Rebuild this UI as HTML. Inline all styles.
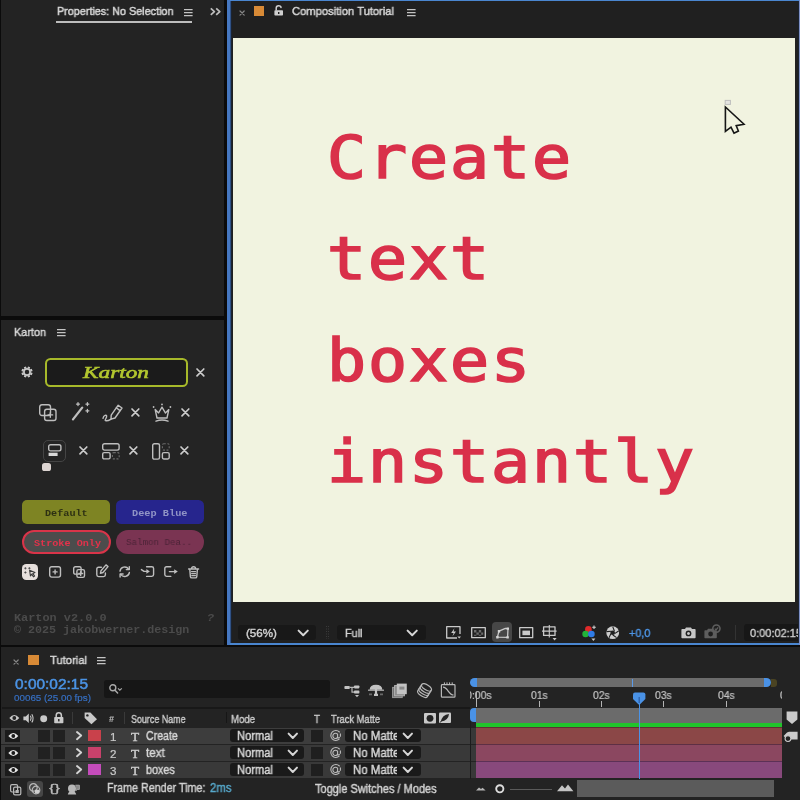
<!DOCTYPE html>
<html lang="en">
<head>
<meta charset="utf-8">
<title>Karton Tutorial</title>
<style>
*{box-sizing:border-box;margin:0;padding:0}
html,body{width:800px;height:800px;overflow:hidden;background:#0b0b0b}
body{position:relative;font-family:"Liberation Sans",sans-serif;color:#cfcfcf;font-size:12px}
.a{position:absolute}
.t{position:absolute;white-space:pre;line-height:1;transform-origin:0 0;will-change:transform}
svg{position:absolute;overflow:visible}
.big{position:absolute;left:327px;font-family:"DejaVu Sans Mono","Liberation Mono",monospace;font-size:59px;letter-spacing:1.75px;line-height:1;color:#d9304a;-webkit-text-stroke:1.7px #d9304a;white-space:nowrap;transform:scaleX(1.1);transform-origin:0 0;will-change:transform}
</style>
</head>
<body>
<div class="a" style="left:1.4px;top:0px;width:222.9px;height:316.2px;background:#232323;"></div>
<div class="t" style="left:57px;top:6.41px;font-family:'Liberation Sans',sans-serif;font-size:11.8px;color:#d8d8d8;-webkit-text-stroke:0.5px #d8d8d8;transform:scaleX(0.9157);">Properties: No Selection</div>
<div class="a" style="left:56px;top:20.6px;width:136px;height:2px;background:#bdbdbd;"></div>
<svg style="left:183.6px;top:9px;" width="9" height="8" viewBox="0 0 9 8"><path d="M0 0.7h8.6M0 3.7h8.6M0 6.7h8.6" stroke="#c4c4c4" stroke-width="1.3" fill="none"/></svg>
<svg style="left:209.6px;top:8.4px;" width="11.2" height="7.4" viewBox="0 0 11.2 7.4"><path d="M0.8 0.4L4.4 3.7L0.8 7M6.2 0.4L9.8 3.7L6.2 7" stroke="#bebebe" stroke-width="1.7" fill="none" stroke-linejoin="round"/></svg>
<div class="a" style="left:1.4px;top:319.8px;width:222.9px;height:324.8px;background:#242424;"></div>
<div class="t" style="left:14px;top:326.51px;font-family:'Liberation Sans',sans-serif;font-size:11.8px;color:#d8d8d8;-webkit-text-stroke:0.45px #d8d8d8;transform:scaleX(0.9204);">Karton</div>
<svg style="left:57px;top:329.4px;" width="9" height="8" viewBox="0 0 9 8"><path d="M0 0.7h8.6M0 3.7h8.6M0 6.7h8.6" stroke="#c4c4c4" stroke-width="1.3" fill="none"/></svg>
<svg style="left:21px;top:366.4px;" width="12" height="12" viewBox="0 0 12 12"><g transform="translate(6 6)"><path d="M3.33 1.38L5.17 2.14M1.38 3.33L2.14 5.17M-1.38 3.33L-2.14 5.17M-3.33 1.38L-5.17 2.14M-3.33 -1.38L-5.17 -2.14M-1.38 -3.33L-2.14 -5.17M1.38 -3.33L2.14 -5.17M3.33 -1.38L5.17 -2.14" stroke="#c8c8c8" stroke-width="2.3" fill="none"/><circle r="3.1" fill="none" stroke="#c8c8c8" stroke-width="1.7"/></g></svg>
<div class="a" style="left:45px;top:358.2px;width:142.6px;height:28.4px;background:#1b1b1b;border:2px solid #a7b92a;border-radius:5.5px"></div>
<div class="t" style="left:82.5px;top:363.56px;font-family:'Liberation Serif',serif;font-size:17.6px;color:#b3c72f;font-style:italic;-webkit-text-stroke:0.6px #b3c72f;transform:scaleX(1.3233);">Karton</div>
<svg style="left:196.6px;top:369.0px;" width="6.8" height="6.8" viewBox="0 0 6.8 6.8"><path d="M0 0L6.8 6.8M6.8 0L0 6.8" stroke="#cbcbcb" stroke-width="1.7" stroke-linecap="round" fill="none"/></svg>
<svg style="left:39px;top:404px;" width="18" height="17" viewBox="0 0 18 17"><rect x="0.7" y="0.7" width="10.8" height="10.8" rx="2.2" stroke="#bebebe" fill="none" stroke-width="1.4" stroke-linecap="round" stroke-linejoin="round"/><rect x="5.6" y="5.3" width="11.4" height="11.2" rx="2.2" stroke="#bebebe" fill="none" stroke-width="1.4" stroke-linecap="round" stroke-linejoin="round" fill="#242424"/><path d="M11.3 8.6v4.6M9 10.9h4.6" stroke="#bebebe" fill="none" stroke-width="1.4" stroke-linecap="round" stroke-linejoin="round" stroke-width="1.6"/></svg>
<svg style="left:71px;top:402px;" width="19" height="20" viewBox="0 0 19 20"><path d="M2 17.4L11.2 5.6" stroke="#bebebe" stroke-width="2.3" stroke-linecap="round"/><path d="M7 0.6v3M5.5 2.1h3M16.4 0.6v3M14.9 2.1h3M16.4 7.3v3M14.9 8.8h3" stroke="#bebebe" stroke-width="1.3" stroke-linecap="round"/></svg>
<svg style="left:101.5px;top:402px;" width="21" height="20" viewBox="0 0 21 20"><path d="M9.2 13.2L16.2 3.2L20 6L13 16L9 17.2Z" stroke="#bebebe" fill="none" stroke-width="1.4" stroke-linecap="round" stroke-linejoin="round"/><path d="M14.3 5.8L18 8.6" stroke="#bebebe" fill="none" stroke-width="1.4" stroke-linecap="round" stroke-linejoin="round"/><path d="M1 16.4C1.5 13 5 12.3 4.6 14.6C4.2 17 2 18.6 4 18.8C6 19 7.6 18 9 17.2" stroke="#bebebe" fill="none" stroke-width="1.4" stroke-linecap="round" stroke-linejoin="round"/></svg>
<svg style="left:131.6px;top:409.1px;" width="6.8" height="6.8" viewBox="0 0 6.8 6.8"><path d="M0 0L6.8 6.8M6.8 0L0 6.8" stroke="#cbcbcb" stroke-width="1.7" stroke-linecap="round" fill="none"/></svg>
<svg style="left:152px;top:402.6px;" width="20" height="19" viewBox="0 0 20 19"><path d="M3.2 6.6L5 15H15L16.8 6.6L13.4 10L10 4.2L6.6 10Z" stroke="#bebebe" fill="none" stroke-width="1.4" stroke-linecap="round" stroke-linejoin="round"/><path d="M4 18.2Q10 15.8 16 18.2" stroke="#bebebe" fill="none" stroke-width="1.4" stroke-linecap="round" stroke-linejoin="round"/><circle cx="10" cy="1.4" r="0.9" fill="#bebebe"/><circle cx="1.6" cy="4" r="0.9" fill="#bebebe"/><circle cx="18.4" cy="4" r="0.9" fill="#bebebe"/></svg>
<svg style="left:181.6px;top:409.1px;" width="6.8" height="6.8" viewBox="0 0 6.8 6.8"><path d="M0 0L6.8 6.8M6.8 0L0 6.8" stroke="#cbcbcb" stroke-width="1.7" stroke-linecap="round" fill="none"/></svg>
<div class="a" style="left:42.5px;top:439.8px;width:23.8px;height:22px;background:transparent;border:1px solid #444444;border-radius:5px"></div>
<svg style="left:48px;top:444.4px;" width="14" height="13" viewBox="0 0 14 13"><rect x="0.7" y="0.7" width="12.2" height="6.2" rx="1.8" stroke="#bebebe" fill="none" stroke-width="1.4" stroke-linecap="round" stroke-linejoin="round"/><rect x="0.6" y="8.7" width="9" height="3.3" fill="#d9d9d9"/></svg>
<div class="a" style="left:41.9px;top:462.7px;width:8.7px;height:8.2px;background:#ddd5d2;border-radius:2.6px"></div>
<svg style="left:80.1px;top:447.40000000000003px;" width="6.8" height="6.8" viewBox="0 0 6.8 6.8"><path d="M0 0L6.8 6.8M6.8 0L0 6.8" stroke="#cbcbcb" stroke-width="1.7" stroke-linecap="round" fill="none"/></svg>
<svg style="left:101.8px;top:442.6px;" width="18" height="17" viewBox="0 0 18 17"><rect x="0.7" y="0.7" width="16.4" height="6.4" rx="1.8" stroke="#bebebe" fill="none" stroke-width="1.4" stroke-linecap="round" stroke-linejoin="round"/><rect x="0.7" y="9.6" width="7.4" height="6.3" rx="1.4" stroke="#bebebe" fill="none" stroke-width="1.4" stroke-linecap="round" stroke-linejoin="round"/><rect x="10.4" y="9.6" width="6.8" height="6.3" rx="1.4" stroke="#6a6a6a" fill="none" stroke-width="1.1" stroke-dasharray="2 1.6"/></svg>
<svg style="left:130.4px;top:447.40000000000003px;" width="6.8" height="6.8" viewBox="0 0 6.8 6.8"><path d="M0 0L6.8 6.8M6.8 0L0 6.8" stroke="#cbcbcb" stroke-width="1.7" stroke-linecap="round" fill="none"/></svg>
<svg style="left:151.8px;top:442.6px;" width="18" height="17" viewBox="0 0 18 17"><rect x="0.7" y="0.7" width="6.8" height="15.4" rx="1.6" stroke="#bebebe" fill="none" stroke-width="1.4" stroke-linecap="round" stroke-linejoin="round"/><rect x="10.4" y="0.7" width="6.8" height="6.4" rx="1.4" stroke="#6a6a6a" fill="none" stroke-width="1.1" stroke-dasharray="2 1.6"/><rect x="10.4" y="9.6" width="6.8" height="6.4" rx="1.4" stroke="#bebebe" fill="none" stroke-width="1.4" stroke-linecap="round" stroke-linejoin="round"/></svg>
<svg style="left:180.79999999999998px;top:447.40000000000003px;" width="6.8" height="6.8" viewBox="0 0 6.8 6.8"><path d="M0 0L6.8 6.8M6.8 0L0 6.8" stroke="#cbcbcb" stroke-width="1.7" stroke-linecap="round" fill="none"/></svg>
<div class="a" style="left:22px;top:500px;width:88.2px;height:23.6px;background:#7e8423;border-radius:5px"></div>
<div class="t" style="left:45px;top:508.57px;font-family:'Liberation Mono',monospace;font-size:9.7px;color:#2d3013;font-weight:bold;transform:scaleX(1.0491);">Default</div>
<div class="a" style="left:116.3px;top:499.8px;width:87.9px;height:23.9px;background:#26258d;border-radius:5.5px"></div>
<div class="t" style="left:132.2px;top:508.57px;font-family:'Liberation Mono',monospace;font-size:9.7px;color:#9094c6;font-weight:bold;transform:scaleX(1.0606);">Deep Blue</div>
<div class="a" style="left:22px;top:529.6px;width:89px;height:24.6px;background:#4c4c4c;border:2.2px solid #d93449;border-radius:12.3px"></div>
<div class="t" style="left:33.6px;top:538.87px;font-family:'Liberation Mono',monospace;font-size:9.7px;color:#e2324b;font-weight:bold;transform:scaleX(1.0476);">Stroke Only</div>
<div class="a" style="left:116.3px;top:529.8px;width:87.9px;height:24px;background:#7a3452;border-radius:12px"></div>
<div class="t" style="left:125.7px;top:538.37px;font-family:'Liberation Mono',monospace;font-size:9.7px;color:#4d2438;transform:scaleX(0.9460);">Salmon Dea..</div>
<div class="a" style="left:22.3px;top:564px;width:15.7px;height:15.5px;background:#e6dfdc;border-radius:4.2px"></div>
<svg style="left:22.3px;top:564px;" width="15.7" height="15.5" viewBox="0 0 15.7 15.5"><path d="M7.6 6.2L13 8.4L10.8 9.4L12.6 12L11.4 12.8L9.8 10.2L8.4 11.8Z" stroke="#3a3a3a" fill="none" stroke-width="1.1" stroke-linecap="round" stroke-linejoin="round"/><path d="M3.4 3.2v2.2M2.3 4.3h2.2M7.4 3.2v2.2M6.3 4.3h2.2M3.4 7.4v2.2M2.3 8.5h2.2" stroke="#4a4a4a" stroke-width="0.9" fill="none"/></svg>
<svg style="left:49.4px;top:566px;" width="12.2" height="11.8" viewBox="0 0 12.2 11.8"><rect x="0.7" y="0.7" width="10.8" height="10.4" rx="2" stroke="#bebebe" fill="none" stroke-width="1.4" stroke-linecap="round" stroke-linejoin="round"/><path d="M6.1 3.9v4M4.1 5.9h4" stroke="#bebebe" fill="none" stroke-width="1.4" stroke-linecap="round" stroke-linejoin="round" stroke-width="1.5"/></svg>
<svg style="left:72.5px;top:566.2px;" width="12" height="12" viewBox="0 0 12 12"><rect x="0.7" y="0.7" width="7.4" height="7.4" rx="1.6" stroke="#bebebe" fill="none" stroke-width="1.4" stroke-linecap="round" stroke-linejoin="round"/><rect x="3.9" y="3.6" width="7.6" height="7.8" rx="1.6" stroke="#bebebe" fill="none" stroke-width="1.4" stroke-linecap="round" stroke-linejoin="round" fill="#242424"/><path d="M7.7 5.6v3.8M5.8 7.5h3.8" stroke="#bebebe" fill="none" stroke-width="1.4" stroke-linecap="round" stroke-linejoin="round"/></svg>
<svg style="left:96px;top:564.2px;" width="12.4" height="13.6" viewBox="0 0 12.4 13.6"><path d="M5.4 3.2H2.6Q0.8 3.2 0.8 5V10.8Q0.8 12.6 2.6 12.6H7.6Q9.4 12.6 9.4 10.8V9" stroke="#bebebe" fill="none" stroke-width="1.4" stroke-linecap="round" stroke-linejoin="round"/><path d="M4.4 9.4L5 6.8L10 0.9L12 2.6L7 8.5Z" stroke="#bebebe" fill="none" stroke-width="1.4" stroke-linecap="round" stroke-linejoin="round"/></svg>
<svg style="left:119px;top:566px;" width="11.4" height="11.6" viewBox="0 0 11.4 11.6"><path d="M1 5.2A4.7 4.7 0 0 1 9.6 3.2M10.4 6.4A4.7 4.7 0 0 1 1.8 8.4" stroke="#bebebe" fill="none" stroke-width="1.4" stroke-linecap="round" stroke-linejoin="round" stroke-width="1.6"/><path d="M10.3 0.6V3.6H7.3M1.1 11V8H4.1" stroke="#bebebe" fill="none" stroke-width="1.4" stroke-linecap="round" stroke-linejoin="round" stroke-width="1.6"/></svg>
<svg style="left:140.6px;top:566.2px;" width="13.4" height="11.2" viewBox="0 0 13.4 11.2"><path d="M5.6 0.8H10.8Q12.6 0.8 12.6 2.6V8.6Q12.6 10.4 10.8 10.4H5.6" stroke="#bebebe" fill="none" stroke-width="1.4" stroke-linecap="round" stroke-linejoin="round" stroke-width="1.5"/><path d="M0.4 3.6L3 5.4H6" stroke="#bebebe" fill="none" stroke-width="1.4" stroke-linecap="round" stroke-linejoin="round" stroke-width="1.5"/><path d="M5.4 3L8.8 5.4L5.4 7.8Z" fill="#bebebe"/></svg>
<svg style="left:164.4px;top:566.2px;" width="14.4" height="11.2" viewBox="0 0 14.4 11.2"><path d="M6.8 0.8H2.6Q0.8 0.8 0.8 2.6V8.6Q0.8 10.4 2.6 10.4H6.8" stroke="#bebebe" fill="none" stroke-width="1.4" stroke-linecap="round" stroke-linejoin="round" stroke-width="1.5"/><path d="M5.4 5.6H11" stroke="#bebebe" fill="none" stroke-width="1.4" stroke-linecap="round" stroke-linejoin="round" stroke-width="1.5"/><path d="M10.2 3.2L13.8 5.6L10.2 8Z" fill="#bebebe"/></svg>
<svg style="left:188.4px;top:565.6px;" width="11.2" height="12.6" viewBox="0 0 11.2 12.6"><path d="M0.6 3H10.6M3.6 2.6Q3.6 0.7 5.6 0.7Q7.6 0.7 7.6 2.6" stroke="#bebebe" fill="none" stroke-width="1.4" stroke-linecap="round" stroke-linejoin="round"/><path d="M1.8 3.4L2.4 10.6Q2.5 11.9 3.8 11.9H7.4Q8.7 11.9 8.8 10.6L9.4 3.4" stroke="#bebebe" fill="none" stroke-width="1.4" stroke-linecap="round" stroke-linejoin="round"/><path d="M3.6 5.6H7.6M3.7 7.6H7.5M3.8 9.6H7.4" stroke="#bebebe" fill="none" stroke-width="1.4" stroke-linecap="round" stroke-linejoin="round" stroke-width="1"/></svg>
<div class="t" style="left:14.4px;top:612.84px;font-family:'Liberation Mono',monospace;font-size:11.7px;color:#4b4b4b;font-weight:bold;transform:scaleX(1.0155);">Karton v2.0.0</div>
<div class="t" style="left:206.6px;top:612.84px;font-family:'Liberation Mono',monospace;font-size:11.7px;color:#4b4b4b;font-weight:bold;font-style:italic;">?</div>
<div class="t" style="left:14.4px;top:624.64px;font-family:'Liberation Mono',monospace;font-size:11.7px;color:#4b4b4b;font-weight:bold;">© 2025 jakobwerner.design</div>
<div class="a" style="left:227.2px;top:0px;width:572.8px;height:645px;background:#202020;"></div>
<div class="a" style="left:227.2px;top:0px;width:572.8px;height:1.4px;background:#4a86d0;"></div>
<div class="a" style="left:227.2px;top:642.6px;width:572.8px;height:2.4px;background:#4a86d0;"></div>
<div class="a" style="left:227.2px;top:0px;width:2.4px;height:645px;background:#4678c2;"></div>
<div class="a" style="left:229.6px;top:1.4px;width:1px;height:641.2px;background:#2f5186;"></div>
<div class="a" style="left:230.6px;top:1.4px;width:1.9px;height:641.2px;background:#1b2330;"></div>
<div class="a" style="left:797.9px;top:1.4px;width:0.9px;height:641.2px;background:#1b2330;"></div>
<div class="a" style="left:798.8px;top:0px;width:1.2px;height:645px;background:#7d8fc4;"></div>
<div class="a" style="left:232.5px;top:38px;width:562.5px;height:563.6px;background:#f1f3e0;"></div>
<div class="big" style="top:127.8px">Create</div>
<div class="big" style="top:229.2px">text</div>
<div class="big" style="top:330.8px">boxes</div>
<div class="big" style="top:432.3px">instantly</div>
<svg style="left:239.9px;top:10.9px;" width="4.2" height="4.2" viewBox="0 0 4.2 4.2"><path d="M0 0L4.2 4.2M4.2 0L0 4.2" stroke="#868686" stroke-width="1.2" stroke-linecap="round" fill="none"/></svg>
<div class="a" style="left:254px;top:5.9px;width:10.2px;height:10px;background:#d88a36;"></div>
<svg style="left:274px;top:5px;" width="10" height="11" viewBox="0 0 10 11"><rect x="0.4" y="5.2" width="8.6" height="5.4" rx="0.8" fill="#cfcfcf"/><path d="M2.2 5V3.2Q2.2 0.8 4.6 0.8Q7 0.8 7 2.6" stroke="#cfcfcf" fill="none" stroke-width="1.5" stroke-linecap="round"/><rect x="4" y="7" width="1.4" height="2" fill="#1f1f1f"/></svg>
<div class="t" style="left:292px;top:6.41px;font-family:'Liberation Sans',sans-serif;font-size:11.8px;color:#d8d8d8;-webkit-text-stroke:0.45px #d8d8d8;transform:scaleX(0.9486);">Composition Tutorial</div>
<svg style="left:406.6px;top:9px;" width="9" height="8" viewBox="0 0 9 8"><path d="M0 0.7h8.6M0 3.7h8.6M0 6.7h8.6" stroke="#c4c4c4" stroke-width="1.3" fill="none"/></svg>
<svg style="left:723px;top:99px;" width="24" height="36" viewBox="0 0 24 36"><rect x="2.2" y="1.4" width="5.2" height="4" fill="#e4e4e0" stroke="#bdbdbd" stroke-width="1"/><path d="M2.4 8L2.4 32.4L8 28.2L11 34.2L15.4 32L13.2 26.6L21 25.2Z" fill="#f1f3e0" stroke="#161616" stroke-width="1.6" stroke-linejoin="miter"/></svg>
<div class="a" style="left:238px;top:625px;width:78px;height:14.6px;background:#181818;border-radius:3px"></div>
<div class="t" style="left:245.5px;top:627.67px;font-family:'Liberation Sans',sans-serif;font-size:11.5px;color:#d2d2d2;-webkit-text-stroke:0.4px #d2d2d2;transform:scaleX(1.0102);">(56%)</div>
<svg style="left:298px;top:630px;" width="10.4" height="5.8" viewBox="0 0 10.4 5.8"><path d="M0.6 0.6L5.2 5.2L9.8 0.6" stroke="#d6d6d6" stroke-width="2" stroke-linecap="round" stroke-linejoin="round" fill="none"/></svg>
<svg style="left:326.4px;top:626px;" width="3" height="13" viewBox="0 0 3 13"><path d="M0.5 0v13M2.5 0v13" stroke="#3a3a3a" stroke-width="1" stroke-dasharray="1 1.5"/></svg>
<div class="a" style="left:336.6px;top:625px;width:89px;height:14.6px;background:#181818;border-radius:3px"></div>
<div class="t" style="left:345px;top:627.67px;font-family:'Liberation Sans',sans-serif;font-size:11.5px;color:#d2d2d2;-webkit-text-stroke:0.4px #d2d2d2;transform:scaleX(0.9444);">Full</div>
<svg style="left:406.6px;top:630px;" width="10.4" height="5.8" viewBox="0 0 10.4 5.8"><path d="M0.6 0.6L5.2 5.2L9.8 0.6" stroke="#d6d6d6" stroke-width="2" stroke-linecap="round" stroke-linejoin="round" fill="none"/></svg>
<svg style="left:446px;top:626px;" width="15.4" height="13" viewBox="0 0 15.4 13"><path d="M11 12H0.7V0.7H14V8" stroke="#c9c9c9" fill="none" stroke-width="1.3" stroke-linejoin="round"/><path d="M8.4 2.2L5.2 7H7.6L6.4 10.6L10 5.6H7.6Z" fill="#c9c9c9"/><path d="M11.4 10.4h3.6l-1.8 2.2z" fill="#c9c9c9"/></svg>
<svg style="left:470.5px;top:627px;" width="15.2" height="11.4" viewBox="0 0 15.2 11.4"><rect x="0.7" y="0.7" width="13.6" height="10" stroke="#c9c9c9" fill="none" stroke-width="1.3" stroke-linejoin="round"/><path d="M3 3h2.4v2.4H3zM7.8 3h2.4v2.4H7.8zM5.4 5.4h2.4v2.4H5.4zM10.2 5.4h2v2.4h-2zM3 7.8h2.4v1H3zM7.8 7.8h2.4v1H7.8z" fill="#6d6d6d"/></svg>
<div class="a" style="left:492px;top:622.4px;width:20px;height:19.8px;background:#474747;border-radius:4px"></div>
<svg style="left:496px;top:626.6px;" width="13.4" height="12" viewBox="0 0 13.4 12"><path d="M1.4 10.2L3 4.2L9.4 1.4L12 1.6L11.6 10.4Z" stroke="#c9c9c9" fill="none" stroke-width="1.3" stroke-linejoin="round"/><path d="M0.2 9h2.4v2.4H0.2zM1.8 3h2.4v2.4H1.8zM10.6 0.4h2.4v2.4h-2.4zM10.4 9.2h2.4v2.4h-2.4z" fill="#d4d4d4"/></svg>
<svg style="left:518.6px;top:627px;" width="14.6" height="11.4" viewBox="0 0 14.6 11.4"><rect x="0.7" y="0.7" width="13" height="10" stroke="#c9c9c9" fill="none" stroke-width="1.3" stroke-linejoin="round"/><rect x="3.4" y="3.6" width="7.6" height="4.6" fill="#c9c9c9"/></svg>
<svg style="left:542.4px;top:625.4px;" width="15" height="16" viewBox="0 0 15 16"><rect x="1.6" y="1.8" width="11.4" height="8.6" stroke="#c9c9c9" fill="none" stroke-width="1.3" stroke-linejoin="round"/><path d="M7.3 0v12.4M0 6.1h14.6" stroke="#c9c9c9" stroke-width="1.1"/><path d="M10.6 13h4l-2 2.4z" fill="#c9c9c9"/></svg>
<svg style="left:582px;top:624.6px;" width="14" height="17" viewBox="0 0 14 17"><circle cx="6.4" cy="4.4" r="3.3" fill="#e02a2a"/><circle cx="3.6" cy="9" r="3.3" fill="#22b43a"/><circle cx="9.4" cy="9" r="3.3" fill="#2f7be6"/><path d="M12 0.4v3.6M10.2 2.2h3.6" stroke="#d0d0d0" stroke-width="1.1"/><path d="M9.4 13.6h4l-2 2.4z" fill="#c9c9c9"/></svg>
<svg style="left:606px;top:626px;" width="13.4" height="13.4" viewBox="0 0 13.4 13.4"><circle cx="6.7" cy="6.7" r="6.4" fill="#cdcdcd"/><circle cx="6.7" cy="6.7" r="2.3" fill="#1f1f1f"/><path d="M6.7 0.6L8.4 5M12.6 5L8.6 7.6M10.6 11.6L6.8 9M3 11.8L5 7.6M0.6 5.6L5.4 5.2" stroke="#1f1f1f" stroke-width="1.1"/></svg>
<div class="t" style="left:628.6px;top:627.67px;font-family:'Liberation Sans',sans-serif;font-size:11.5px;color:#4d95e6;-webkit-text-stroke:0.4px #4d95e6;transform:scaleX(0.9426);">+0,0</div>
<svg style="left:681px;top:627.4px;" width="15" height="11.4" viewBox="0 0 15 11.4"><path d="M0.4 2.8Q0.4 2 1.2 2H4L5 0.4H10L11 2H13.8Q14.6 2 14.6 2.8V10.4Q14.6 11.2 13.8 11.2H1.2Q0.4 11.2 0.4 10.4Z" fill="#c6c6c6"/><circle cx="7.5" cy="6.4" r="2.9" fill="#1f1f1f"/><circle cx="7.5" cy="6.4" r="1.5" fill="#c6c6c6"/></svg>
<svg style="left:703.6px;top:624px;" width="18" height="15" viewBox="0 0 18 15"><path d="M0.4 7Q0.4 6.2 1.2 6.2H3L4 4.8H9L10 6.2H12Q12.8 6.2 12.8 7V13.4Q12.8 14.2 12 14.2H1.2Q0.4 14.2 0.4 13.4Z" fill="#5e5e5e"/><circle cx="6.6" cy="10" r="2.4" fill="#1f1f1f"/><circle cx="12.4" cy="4.6" r="3.6" fill="none" stroke="#5e5e5e" stroke-width="1.6"/><path d="M10.8 4.6L12 6L14.2 3.4" stroke="#5e5e5e" stroke-width="1.2" fill="none"/></svg>
<div class="a" style="left:735.4px;top:625px;width:1px;height:14.6px;background:#333333;"></div>
<div class="a" style="left:743.8px;top:624px;width:54px;height:17px;background:#171717;border-radius:3px 0 0 3px"></div>
<div class="a" style="left:743.8px;top:624px;width:53.8px;height:17px;overflow:hidden">
<div class="t" style="left:6.7px;top:3.77px;font-family:'Liberation Sans',sans-serif;font-size:11.5px;color:#d2d2d2;-webkit-text-stroke:0.35px #d2d2d2;transform:scaleX(0.9566);">0:00:02:15</div>
</div>
<div class="a" style="left:1.4px;top:647.4px;width:798.6px;height:152.6px;background:#232323;"></div>
<svg style="left:13.8px;top:659.5px;" width="4.2" height="4.2" viewBox="0 0 4.2 4.2"><path d="M0 0L4.2 4.2M4.2 0L0 4.2" stroke="#868686" stroke-width="1.2" stroke-linecap="round" fill="none"/></svg>
<div class="a" style="left:28px;top:654.6px;width:11px;height:10px;background:#d88a36;"></div>
<div class="t" style="left:50px;top:654.51px;font-family:'Liberation Sans',sans-serif;font-size:11.8px;color:#d8d8d8;-webkit-text-stroke:0.45px #d8d8d8;transform:scaleX(0.9510);">Tutorial</div>
<svg style="left:97px;top:657.2px;" width="9" height="8" viewBox="0 0 9 8"><path d="M0 0.7h8.6M0 3.7h8.6M0 6.7h8.6" stroke="#c4c4c4" stroke-width="1.3" fill="none"/></svg>
<div class="t" style="left:15px;top:676.81px;font-family:'Liberation Sans',sans-serif;font-size:14.4px;color:#4b93e4;-webkit-text-stroke:0.5px #4b93e4;transform:scaleX(1.0730);">0:00:02:15</div>
<div class="t" style="left:14px;top:693.47px;font-family:'Liberation Sans',sans-serif;font-size:9.6px;color:#366fc2;-webkit-text-stroke:0.2px #366fc2;transform:scaleX(1.0237);">00065 (25.00 fps)</div>
<div class="a" style="left:104px;top:680px;width:226px;height:17.6px;background:#161616;border-radius:2.5px"></div>
<svg style="left:109px;top:683.6px;" width="14" height="10" viewBox="0 0 14 10"><circle cx="3.8" cy="3.8" r="3" fill="none" stroke="#a9a9a9" stroke-width="1.4"/><path d="M6 6.2L8.6 9" stroke="#a9a9a9" stroke-width="1.5" stroke-linecap="round"/><path d="M9 4.4L10.8 6.2L12.8 4.4" stroke="#a9a9a9" stroke-width="1.2" fill="none"/></svg>
<svg style="left:343.6px;top:685px;" width="16.4" height="12.4" viewBox="0 0 16.4 12.4"><rect x="0.4" y="1" width="5.4" height="3" rx="0.8" fill="#c3c3c3"/><rect x="10" y="0.4" width="5.4" height="3" rx="0.8" fill="#c3c3c3"/><rect x="10" y="5.6" width="5.4" height="3" rx="0.8" fill="#c3c3c3"/><path d="M5.8 2.4H8V7.2H10M8 2.4H10" stroke="#b8b8b8" fill="none" stroke-width="1.2" stroke-linejoin="round"/><path d="M11 10h4l-2 2.2z" fill="#c3c3c3"/></svg>
<svg style="left:367.6px;top:684.4px;" width="16" height="11.8" viewBox="0 0 16 11.8"><path d="M1.6 5.8Q2 0.8 8 0.8Q14 0.8 14.4 5.8Z" fill="#c3c3c3"/><path d="M0 6.2H16" stroke="#b8b8b8" fill="none" stroke-width="1.2" stroke-linejoin="round"/><path d="M8 5V10.6M6 10.8H10" stroke="#c3c3c3" stroke-width="2.2"/><path d="M1 10.4h3M12 10.4h3" stroke="#6a6a6a" stroke-width="1.6"/></svg>
<svg style="left:392px;top:683px;" width="15.4" height="15.2" viewBox="0 0 15.4 15.2"><rect x="0.6" y="4.4" width="9.6" height="10.2" fill="#6e6e6e" stroke="#9a9a9a" stroke-width="1"/><rect x="2.6" y="2.6" width="9.8" height="10.2" fill="#8a8a8a" stroke="#b4b4b4" stroke-width="1"/><rect x="4.8" y="0.6" width="10" height="10.6" fill="#c3c3c3"/><rect x="7.4" y="3.6" width="5" height="3" fill="#8a8a8a"/></svg>
<svg style="left:416.6px;top:683px;" width="15" height="15.2" viewBox="0 0 15 15.2"><g transform="rotate(32 7.5 7.6)"><ellipse cx="7.5" cy="3.8" rx="5.6" ry="2.6" stroke="#b8b8b8" fill="none" stroke-width="1.2" stroke-linejoin="round" fill="#8a8a8a"/><path d="M1.9 3.8V11.2A5.6 2.6 0 0 0 13.1 11.2V3.8" stroke="#b8b8b8" fill="none" stroke-width="1.2" stroke-linejoin="round"/><path d="M1.9 6.3A5.6 2.6 0 0 0 13.1 6.3M1.9 8.8A5.6 2.6 0 0 0 13.1 8.8" stroke="#b8b8b8" fill="none" stroke-width="1.2" stroke-linejoin="round"/></g></svg>
<svg style="left:440px;top:682px;" width="16.4" height="16.2" viewBox="0 0 16.4 16.2"><rect x="1.4" y="2.6" width="13.6" height="12.6" rx="0.8" stroke="#b8b8b8" fill="none" stroke-width="1.2" stroke-linejoin="round" stroke-width="1.4"/><path d="M3 5.2C8 5.2 8.4 13 13.6 13" stroke="#b8b8b8" fill="none" stroke-width="1.2" stroke-linejoin="round"/><path d="M4.4 0.4v2M7 0.4v2M9.6 0.4v2M12.2 0.4v2" stroke="#c3c3c3" stroke-width="1"/></svg>
<div class="a" style="left:2px;top:707.4px;width:468px;height:1.6px;background:#181818;"></div>
<svg style="left:9px;top:714px;" width="10.6" height="8" viewBox="0 0 10.6 8"><path d="M0.3 4Q5.3 -2 10.3 4Q5.3 10 0.3 4Z" fill="#c9c9c9"/><circle cx="5.3" cy="4" r="1.9" fill="#232323"/></svg>
<svg style="left:23px;top:713px;" width="11" height="10.6" viewBox="0 0 11 10.6"><path d="M0.4 3.4H2.8L5.8 0.6V10L2.8 7.2H0.4Z" fill="#c9c9c9"/><path d="M7.4 2.8Q9 5.3 7.4 7.8M8.8 1.2Q11.4 5.3 8.8 9.4" stroke="#c9c9c9" stroke-width="1.1" fill="none"/></svg>
<svg style="left:40px;top:715px;" width="7.4" height="7.4" viewBox="0 0 7.4 7.4"><circle cx="3.7" cy="3.7" r="3.5" fill="#c9c9c9"/></svg>
<svg style="left:54.4px;top:711.8px;" width="9.6" height="11.4" viewBox="0 0 9.6 11.4"><rect x="0.2" y="5" width="9.2" height="6.2" rx="0.8" fill="#c9c9c9"/><path d="M2.2 5V3.4Q2.2 0.8 4.8 0.8Q7.4 0.8 7.4 3.4V5" stroke="#c9c9c9" stroke-width="1.5" fill="none"/><rect x="4.1" y="7" width="1.4" height="2.4" fill="#232323"/></svg>
<div class="a" style="left:72px;top:712px;width:1px;height:12px;background:#3a3a3a;"></div>
<svg style="left:84px;top:711.6px;" width="13.6" height="12.6" viewBox="0 0 13.6 12.6"><path d="M0.6 0.6H6.4L13 7.2L7.4 12.2L0.6 6Z" fill="#c9c9c9"/><circle cx="3.4" cy="3.4" r="1.2" fill="#232323"/></svg>
<div class="t" style="left:108.6px;top:714.92px;font-family:'Liberation Sans',sans-serif;font-size:8.6px;color:#bdbdbd;font-style:italic;-webkit-text-stroke:0.2px #bdbdbd;">#</div>
<div class="a" style="left:124px;top:712px;width:1px;height:12px;background:#3a3a3a;"></div>
<div class="a" style="left:226px;top:712px;width:1px;height:11px;background:#161616;"></div>
<div class="t" style="left:130.6px;top:713.63px;font-family:'Liberation Sans',sans-serif;font-size:11.3px;color:#cdcdcd;-webkit-text-stroke:0.4px #cdcdcd;transform:scaleX(0.7904);">Source Name</div>
<div class="t" style="left:231px;top:713.63px;font-family:'Liberation Sans',sans-serif;font-size:11.3px;color:#cdcdcd;-webkit-text-stroke:0.4px #cdcdcd;transform:scaleX(0.8491);">Mode</div>
<div class="t" style="left:314.2px;top:713.63px;font-family:'Liberation Sans',sans-serif;font-size:11.3px;color:#cdcdcd;-webkit-text-stroke:0.4px #cdcdcd;transform:scaleX(0.8688);">T</div>
<div class="t" style="left:331px;top:713.63px;font-family:'Liberation Sans',sans-serif;font-size:11.3px;color:#cdcdcd;-webkit-text-stroke:0.4px #cdcdcd;transform:scaleX(0.8274);">Track Matte</div>
<svg style="left:423.6px;top:713px;" width="12" height="10.6" viewBox="0 0 12 10.6"><rect x="0" y="0" width="12" height="10.6" rx="1" fill="#c9c9c9"/><circle cx="6" cy="5.3" r="3.4" fill="#232323"/></svg>
<svg style="left:439px;top:712.4px;" width="12" height="11" viewBox="0 0 12 11"><rect x="0" y="0.6" width="12" height="10.4" rx="1" fill="#c9c9c9"/><path d="M2 9.4Q3 3 10 2Q9.4 8.6 2 9.4Z" fill="#232323"/><path d="M1 10.4L7 4.6" stroke="#232323" stroke-width="1"/></svg>
<div class="a" style="left:1.4px;top:727.5px;width:468.6px;height:16.2px;background:#3d3d3d;"></div>
<div class="a" style="left:5px;top:729.5px;width:15px;height:12.6px;background:#1b1b1b;"></div>
<svg style="left:7.6px;top:731.7px;" width="10.6" height="8" viewBox="0 0 10.6 8"><path d="M0.3 4Q5.3 -2 10.3 4Q5.3 10 0.3 4Z" fill="#e8e8e8"/><circle cx="5.3" cy="4" r="1.9" fill="#1b1b1b"/></svg>
<div class="a" style="left:37.5px;top:729.5px;width:12px;height:12.6px;background:#212121;"></div>
<div class="a" style="left:52.6px;top:729.5px;width:12.4px;height:12.6px;background:#212121;"></div>
<svg style="left:76.4px;top:731.1px;" width="6.2" height="9.2" viewBox="0 0 6.2 9.2"><path d="M1 1L5.2 4.6L1 8.2" stroke="#d4d4d4" stroke-width="1.9" fill="none" stroke-linecap="round" stroke-linejoin="round"/></svg>
<div class="a" style="left:88px;top:729.9px;width:13.2px;height:11.4px;background:#c9414b;"></div>
<div class="t" style="left:110px;top:730.68px;font-family:'Liberation Sans',sans-serif;font-size:11.6px;color:#c9c9c9;-webkit-text-stroke:0.2px #c9c9c9;">1</div>
<div class="t" style="left:130.8px;top:730.01px;font-family:'Liberation Serif',serif;font-size:13px;color:#cdcdcd;-webkit-text-stroke:0.4px #cdcdcd;transform:scaleX(1.0310);">T</div>
<div class="t" style="left:146.2px;top:730.34px;font-family:'Liberation Sans',sans-serif;font-size:12px;color:#d8d8d8;-webkit-text-stroke:0.4px #d8d8d8;transform:scaleX(0.8826);">Create</div>
<div class="a" style="left:229.6px;top:729.1px;width:74.6px;height:13.2px;background:#1a1a1a;border-radius:3px"></div>
<div class="t" style="left:237.4px;top:730.24px;font-family:'Liberation Sans',sans-serif;font-size:12px;color:#d8d8d8;-webkit-text-stroke:0.45px #d8d8d8;transform:scaleX(0.9309);">Normal</div>
<svg style="left:287.6px;top:733.1px;" width="9.6" height="5.6" viewBox="0 0 9.6 5.6"><path d="M0.6 0.6L4.8 5.0L9.0 0.6" stroke="#d6d6d6" stroke-width="2" stroke-linecap="round" stroke-linejoin="round" fill="none"/></svg>
<div class="a" style="left:311.3px;top:729.5px;width:12px;height:12.6px;background:#1f1f1f;"></div>
<svg style="left:328.6px;top:730.3000000000001px;" width="12.4" height="11" viewBox="0 0 12.4 11"><path d="M8.6 4.4A2.6 2.6 0 1 0 8.6 7.4V4M8.6 7.4Q9.4 8.6 10.4 7.4M10.2 9.2A5 5 0 1 1 10.4 2" stroke="#bdbdbd" stroke-width="1.1" fill="none" stroke-linecap="round"/><path d="M11.4 3.6v3.2" stroke="#bdbdbd" stroke-width="1.1"/></svg>
<div class="a" style="left:344.5px;top:729.1px;width:76px;height:13.2px;background:#1a1a1a;border-radius:3px"></div>
<div class="a" style="left:344.5px;top:729.1px;width:52.4px;height:13.2px;overflow:hidden">
<div class="t" style="left:8.4px;top:1.14px;font-family:'Liberation Sans',sans-serif;font-size:12px;color:#d8d8d8;-webkit-text-stroke:0.45px #d8d8d8;transform:scaleX(0.9530);">No Matte</div>
</div>
<svg style="left:403.2px;top:733.1px;" width="9.6" height="5.6" viewBox="0 0 9.6 5.6"><path d="M0.6 0.6L4.8 5.0L9.0 0.6" stroke="#d6d6d6" stroke-width="2" stroke-linecap="round" stroke-linejoin="round" fill="none"/></svg>
<div class="a" style="left:1.4px;top:744.5px;width:468.6px;height:16.2px;background:#393939;"></div>
<div class="a" style="left:5px;top:746.5px;width:15px;height:12.6px;background:#1b1b1b;"></div>
<svg style="left:7.6px;top:748.7px;" width="10.6" height="8" viewBox="0 0 10.6 8"><path d="M0.3 4Q5.3 -2 10.3 4Q5.3 10 0.3 4Z" fill="#e8e8e8"/><circle cx="5.3" cy="4" r="1.9" fill="#1b1b1b"/></svg>
<div class="a" style="left:37.5px;top:746.5px;width:12px;height:12.6px;background:#212121;"></div>
<div class="a" style="left:52.6px;top:746.5px;width:12.4px;height:12.6px;background:#212121;"></div>
<svg style="left:76.4px;top:748.1px;" width="6.2" height="9.2" viewBox="0 0 6.2 9.2"><path d="M1 1L5.2 4.6L1 8.2" stroke="#d4d4d4" stroke-width="1.9" fill="none" stroke-linecap="round" stroke-linejoin="round"/></svg>
<div class="a" style="left:88px;top:746.9px;width:13.2px;height:11.4px;background:#c8416b;"></div>
<div class="t" style="left:110px;top:747.68px;font-family:'Liberation Sans',sans-serif;font-size:11.6px;color:#c9c9c9;-webkit-text-stroke:0.2px #c9c9c9;">2</div>
<div class="t" style="left:130.8px;top:747.01px;font-family:'Liberation Serif',serif;font-size:13px;color:#cdcdcd;-webkit-text-stroke:0.4px #cdcdcd;transform:scaleX(1.0310);">T</div>
<div class="t" style="left:146.2px;top:747.34px;font-family:'Liberation Sans',sans-serif;font-size:12px;color:#d8d8d8;-webkit-text-stroke:0.4px #d8d8d8;transform:scaleX(0.9719);">text</div>
<div class="a" style="left:229.6px;top:746.1px;width:74.6px;height:13.2px;background:#1a1a1a;border-radius:3px"></div>
<div class="t" style="left:237.4px;top:747.24px;font-family:'Liberation Sans',sans-serif;font-size:12px;color:#d8d8d8;-webkit-text-stroke:0.45px #d8d8d8;transform:scaleX(0.9309);">Normal</div>
<svg style="left:287.6px;top:750.1px;" width="9.6" height="5.6" viewBox="0 0 9.6 5.6"><path d="M0.6 0.6L4.8 5.0L9.0 0.6" stroke="#d6d6d6" stroke-width="2" stroke-linecap="round" stroke-linejoin="round" fill="none"/></svg>
<div class="a" style="left:311.3px;top:746.5px;width:12px;height:12.6px;background:#1f1f1f;"></div>
<svg style="left:328.6px;top:747.3000000000001px;" width="12.4" height="11" viewBox="0 0 12.4 11"><path d="M8.6 4.4A2.6 2.6 0 1 0 8.6 7.4V4M8.6 7.4Q9.4 8.6 10.4 7.4M10.2 9.2A5 5 0 1 1 10.4 2" stroke="#bdbdbd" stroke-width="1.1" fill="none" stroke-linecap="round"/><path d="M11.4 3.6v3.2" stroke="#bdbdbd" stroke-width="1.1"/></svg>
<div class="a" style="left:344.5px;top:746.1px;width:76px;height:13.2px;background:#1a1a1a;border-radius:3px"></div>
<div class="a" style="left:344.5px;top:746.1px;width:52.4px;height:13.2px;overflow:hidden">
<div class="t" style="left:8.4px;top:1.14px;font-family:'Liberation Sans',sans-serif;font-size:12px;color:#d8d8d8;-webkit-text-stroke:0.45px #d8d8d8;transform:scaleX(0.9530);">No Matte</div>
</div>
<svg style="left:403.2px;top:750.1px;" width="9.6" height="5.6" viewBox="0 0 9.6 5.6"><path d="M0.6 0.6L4.8 5.0L9.0 0.6" stroke="#d6d6d6" stroke-width="2" stroke-linecap="round" stroke-linejoin="round" fill="none"/></svg>
<div class="a" style="left:1.4px;top:761.5px;width:468.6px;height:16.2px;background:#393939;"></div>
<div class="a" style="left:5px;top:763.5px;width:15px;height:12.6px;background:#1b1b1b;"></div>
<svg style="left:7.6px;top:765.7px;" width="10.6" height="8" viewBox="0 0 10.6 8"><path d="M0.3 4Q5.3 -2 10.3 4Q5.3 10 0.3 4Z" fill="#e8e8e8"/><circle cx="5.3" cy="4" r="1.9" fill="#1b1b1b"/></svg>
<div class="a" style="left:37.5px;top:763.5px;width:12px;height:12.6px;background:#212121;"></div>
<div class="a" style="left:52.6px;top:763.5px;width:12.4px;height:12.6px;background:#212121;"></div>
<svg style="left:76.4px;top:765.1px;" width="6.2" height="9.2" viewBox="0 0 6.2 9.2"><path d="M1 1L5.2 4.6L1 8.2" stroke="#d4d4d4" stroke-width="1.9" fill="none" stroke-linecap="round" stroke-linejoin="round"/></svg>
<div class="a" style="left:88px;top:763.9px;width:13.2px;height:11.4px;background:#c44cbb;"></div>
<div class="t" style="left:110px;top:764.68px;font-family:'Liberation Sans',sans-serif;font-size:11.6px;color:#c9c9c9;-webkit-text-stroke:0.2px #c9c9c9;">3</div>
<div class="t" style="left:130.8px;top:764.01px;font-family:'Liberation Serif',serif;font-size:13px;color:#cdcdcd;-webkit-text-stroke:0.4px #cdcdcd;transform:scaleX(1.0310);">T</div>
<div class="t" style="left:146.2px;top:764.34px;font-family:'Liberation Sans',sans-serif;font-size:12px;color:#d8d8d8;-webkit-text-stroke:0.4px #d8d8d8;transform:scaleX(0.8991);">boxes</div>
<div class="a" style="left:229.6px;top:763.1px;width:74.6px;height:13.2px;background:#1a1a1a;border-radius:3px"></div>
<div class="t" style="left:237.4px;top:764.24px;font-family:'Liberation Sans',sans-serif;font-size:12px;color:#d8d8d8;-webkit-text-stroke:0.45px #d8d8d8;transform:scaleX(0.9309);">Normal</div>
<svg style="left:287.6px;top:767.1px;" width="9.6" height="5.6" viewBox="0 0 9.6 5.6"><path d="M0.6 0.6L4.8 5.0L9.0 0.6" stroke="#d6d6d6" stroke-width="2" stroke-linecap="round" stroke-linejoin="round" fill="none"/></svg>
<div class="a" style="left:311.3px;top:763.5px;width:12px;height:12.6px;background:#1f1f1f;"></div>
<svg style="left:328.6px;top:764.3000000000001px;" width="12.4" height="11" viewBox="0 0 12.4 11"><path d="M8.6 4.4A2.6 2.6 0 1 0 8.6 7.4V4M8.6 7.4Q9.4 8.6 10.4 7.4M10.2 9.2A5 5 0 1 1 10.4 2" stroke="#bdbdbd" stroke-width="1.1" fill="none" stroke-linecap="round"/><path d="M11.4 3.6v3.2" stroke="#bdbdbd" stroke-width="1.1"/></svg>
<div class="a" style="left:344.5px;top:763.1px;width:76px;height:13.2px;background:#1a1a1a;border-radius:3px"></div>
<div class="a" style="left:344.5px;top:763.1px;width:52.4px;height:13.2px;overflow:hidden">
<div class="t" style="left:8.4px;top:1.14px;font-family:'Liberation Sans',sans-serif;font-size:12px;color:#d8d8d8;-webkit-text-stroke:0.45px #d8d8d8;transform:scaleX(0.9530);">No Matte</div>
</div>
<svg style="left:403.2px;top:767.1px;" width="9.6" height="5.6" viewBox="0 0 9.6 5.6"><path d="M0.6 0.6L4.8 5.0L9.0 0.6" stroke="#d6d6d6" stroke-width="2" stroke-linecap="round" stroke-linejoin="round" fill="none"/></svg>
<svg style="left:10px;top:783.6px;" width="11.4" height="11.4" viewBox="0 0 11.4 11.4"><rect x="0.6" y="0.6" width="7" height="7.4" rx="1.4" stroke="#b9b9b9" fill="none" stroke-width="1.2" stroke-linejoin="round"/><rect x="3.6" y="3.2" width="7.2" height="7.6" rx="1.4" stroke="#b9b9b9" fill="none" stroke-width="1.2" stroke-linejoin="round" fill="#232323"/><rect x="5.6" y="6" width="3.2" height="3" fill="#b9b9b9"/></svg>
<div class="a" style="left:27px;top:781px;width:15.6px;height:16px;background:#464646;border-radius:3px"></div>
<svg style="left:29.4px;top:783.4px;" width="11.4" height="11.4" viewBox="0 0 11.4 11.4"><circle cx="4.4" cy="4.4" r="3.8" stroke="#b9b9b9" fill="none" stroke-width="1.2" stroke-linejoin="round"/><circle cx="7" cy="7" r="3.8" stroke="#b9b9b9" fill="none" stroke-width="1.2" stroke-linejoin="round" fill="#8a8a8a"/><rect x="6" y="6.8" width="4.2" height="3.6" fill="#cfcfcf"/></svg>
<div class="t" style="left:48.6px;top:783.27px;font-family:'Liberation Sans',sans-serif;font-size:11.5px;color:#b9b9b9;-webkit-text-stroke:0.3px #b9b9b9;transform:scaleX(1.4309);">{}</div>
<svg style="left:67px;top:783.6px;" width="13" height="11" viewBox="0 0 13 11"><circle cx="5" cy="4.4" r="4" fill="#b9b9b9"/><path d="M0.8 10.6Q1.4 7 5 7Q8.6 7 9.2 10.6Z" fill="#b9b9b9"/><path d="M8.4 1.2H12.4V5.4H10.4L9.2 6.6V5.4" fill="#8a8a8a" stroke="#b9b9b9" stroke-width="0.8"/></svg>
<div class="t" style="left:106.6px;top:782.44px;font-family:'Liberation Sans',sans-serif;font-size:12px;color:#d2d2d2;-webkit-text-stroke:0.4px #d2d2d2;transform:scaleX(0.8942);">Frame Render Time:</div>
<div class="t" style="left:209.6px;top:782.44px;font-family:'Liberation Sans',sans-serif;font-size:12px;color:#57a9cc;-webkit-text-stroke:0.4px #57a9cc;transform:scaleX(0.9439);">2ms</div>
<div class="t" style="left:315.4px;top:782.64px;font-family:'Liberation Sans',sans-serif;font-size:12px;color:#d2d2d2;-webkit-text-stroke:0.45px #d2d2d2;transform:scaleX(0.9161);">Toggle Switches / Modes</div>
<div class="a" style="left:469.6px;top:709px;width:1px;height:69.6px;background:#1c1c1c;"></div>
<div class="a" style="left:477.2px;top:678.2px;width:287.2px;height:9px;background:#6c6c6c;"></div>
<div class="a" style="left:470px;top:678.2px;width:7.4px;height:9px;background:#4a92e6;border-radius:4.5px 0 0 4.5px"></div>
<div class="a" style="left:764.2px;top:678.2px;width:6.8px;height:9px;background:#4a92e6;border-radius:0 4.5px 4.5px 0"></div>
<div class="a" style="left:771px;top:678.6px;width:6px;height:8.4px;background:#4a4322;border-radius:0 3px 3px 0"></div>
<div class="a" style="left:632px;top:679px;width:1.4px;height:8px;background:#5a9ae8;"></div>
<div class="a" style="left:470.4px;top:688px;width:311.8px;height:19.4px;overflow:hidden">
<div class="t" style="left:-4.7999999999999545px;top:2.03px;font-family:'Liberation Sans',sans-serif;font-size:10.6px;color:#c4c4c4;-webkit-text-stroke:0.2px #c4c4c4;transform:scaleX(0.9876);">0:00s</div>
<div class="a" style="left:6.000000000000034px;top:4px;width:1.1px;height:15px;background:#b4b4b4;"></div>
<div class="t" style="left:60.30000000000005px;top:2.03px;font-family:'Liberation Sans',sans-serif;font-size:10.6px;color:#c4c4c4;-webkit-text-stroke:0.2px #c4c4c4;transform:scaleX(0.9711);">01s</div>
<div class="a" style="left:68.30000000000004px;top:13.2px;width:1.1px;height:5.6px;background:#b4b4b4;"></div>
<div class="t" style="left:122.6px;top:2.03px;font-family:'Liberation Sans',sans-serif;font-size:10.6px;color:#c4c4c4;-webkit-text-stroke:0.2px #c4c4c4;transform:scaleX(0.9711);">02s</div>
<div class="a" style="left:130.6px;top:13.2px;width:1.1px;height:5.6px;background:#b4b4b4;"></div>
<div class="t" style="left:184.90000000000006px;top:2.03px;font-family:'Liberation Sans',sans-serif;font-size:10.6px;color:#c4c4c4;-webkit-text-stroke:0.2px #c4c4c4;transform:scaleX(0.9711);">03s</div>
<div class="a" style="left:192.90000000000006px;top:13.2px;width:1.1px;height:5.6px;background:#b4b4b4;"></div>
<div class="t" style="left:247.20000000000002px;top:2.03px;font-family:'Liberation Sans',sans-serif;font-size:10.6px;color:#c4c4c4;-webkit-text-stroke:0.2px #c4c4c4;transform:scaleX(0.9711);">04s</div>
<div class="a" style="left:255.20000000000002px;top:13.2px;width:1.1px;height:5.6px;background:#b4b4b4;"></div>
<div class="t" style="left:309.5px;top:2.03px;font-family:'Liberation Sans',sans-serif;font-size:10.6px;color:#c4c4c4;-webkit-text-stroke:0.2px #c4c4c4;transform:scaleX(0.9711);">05s</div>
<div class="a" style="left:317.5px;top:13.2px;width:1.1px;height:5.6px;background:#b4b4b4;"></div>
</div>
<div class="a" style="left:476px;top:707.5px;width:306.4px;height:15.1px;background:#6b6b6b;"></div>
<div class="a" style="left:470.2px;top:708px;width:5.8px;height:14.4px;background:#4a92e6;border-radius:4px 0 0 4px"></div>
<div class="a" style="left:476px;top:723px;width:306.4px;height:4.3px;background:#21c32b;"></div>
<div class="a" style="left:470.6px;top:727.5px;width:5.4px;height:16.2px;background:#383838;"></div>
<div class="a" style="left:476px;top:727.1px;width:306.4px;height:17px;background:#5e2f33;"></div>
<div class="a" style="left:476px;top:727.8px;width:306.4px;height:15.9px;background:#8b4747;"></div>
<div class="a" style="left:470.6px;top:744.5px;width:5.4px;height:16.2px;background:#383838;"></div>
<div class="a" style="left:476px;top:744.1px;width:306.4px;height:17px;background:#5e2f44;"></div>
<div class="a" style="left:476px;top:744.8px;width:306.4px;height:15.9px;background:#8b4760;"></div>
<div class="a" style="left:470.6px;top:761.5px;width:5.4px;height:16.2px;background:#383838;"></div>
<div class="a" style="left:476px;top:761.1px;width:306.4px;height:17px;background:#5c3156;"></div>
<div class="a" style="left:476px;top:761.8px;width:306.4px;height:16.4px;background:#88497c;"></div>
<div class="a" style="left:638.6px;top:704px;width:1.5px;height:75px;background:#4a92e6;"></div>
<svg style="left:633px;top:692.4px;" width="12.4" height="12.8" viewBox="0 0 12.4 12.8"><path d="M0 2.4Q0 0.4 2 0.4H10.4Q12.4 0.4 12.4 2.4V7L6.8 12.6H5.6L0 7Z" fill="#4a92e6"/><path d="M6.2 5v6" stroke="#2a5fa8" stroke-width="1.2"/></svg>
<svg style="left:786px;top:711px;" width="12" height="13.6" viewBox="0 0 12 13.6"><path d="M0.6 0.6H11.4V8.6L6 13L0.6 8.6Z" fill="#cbcbcb"/></svg>
<svg style="left:783px;top:730.6px;" width="15.4" height="11.6" viewBox="0 0 15.4 11.6"><path d="M6 0.8H14.6V8.4H8L6 10.8L4 8.4L0.6 5L4 1.4Z" fill="#cbcbcb"/><circle cx="5" cy="7.6" r="2.9" fill="#232323" stroke="#cbcbcb" stroke-width="1.1"/></svg>
<svg style="left:476px;top:785.6px;" width="10" height="5" viewBox="0 0 10 5"><path d="M0 4.6L3 1.4L5 3L6.6 1.8L9.6 4.6Z" fill="#b4b4b4"/></svg>
<svg style="left:495.2px;top:784.2px;" width="9.6" height="9.6" viewBox="0 0 9.6 9.6"><circle cx="4.8" cy="4.8" r="3.6" fill="none" stroke="#dcdcdc" stroke-width="1.9"/></svg>
<div class="a" style="left:510px;top:788.6px;width:42px;height:1.2px;background:#5a5a5a;"></div>
<svg style="left:556.6px;top:783.6px;" width="16.4" height="7.4" viewBox="0 0 16.4 7.4"><path d="M0 7.2L5 1.2L8 4.6L11 0.4L16.4 7.2Z" fill="#c4c4c4"/></svg>
<div class="a" style="left:577.4px;top:780px;width:196.2px;height:17.4px;background:#5b5b5b;"></div>
</body>
</html>
